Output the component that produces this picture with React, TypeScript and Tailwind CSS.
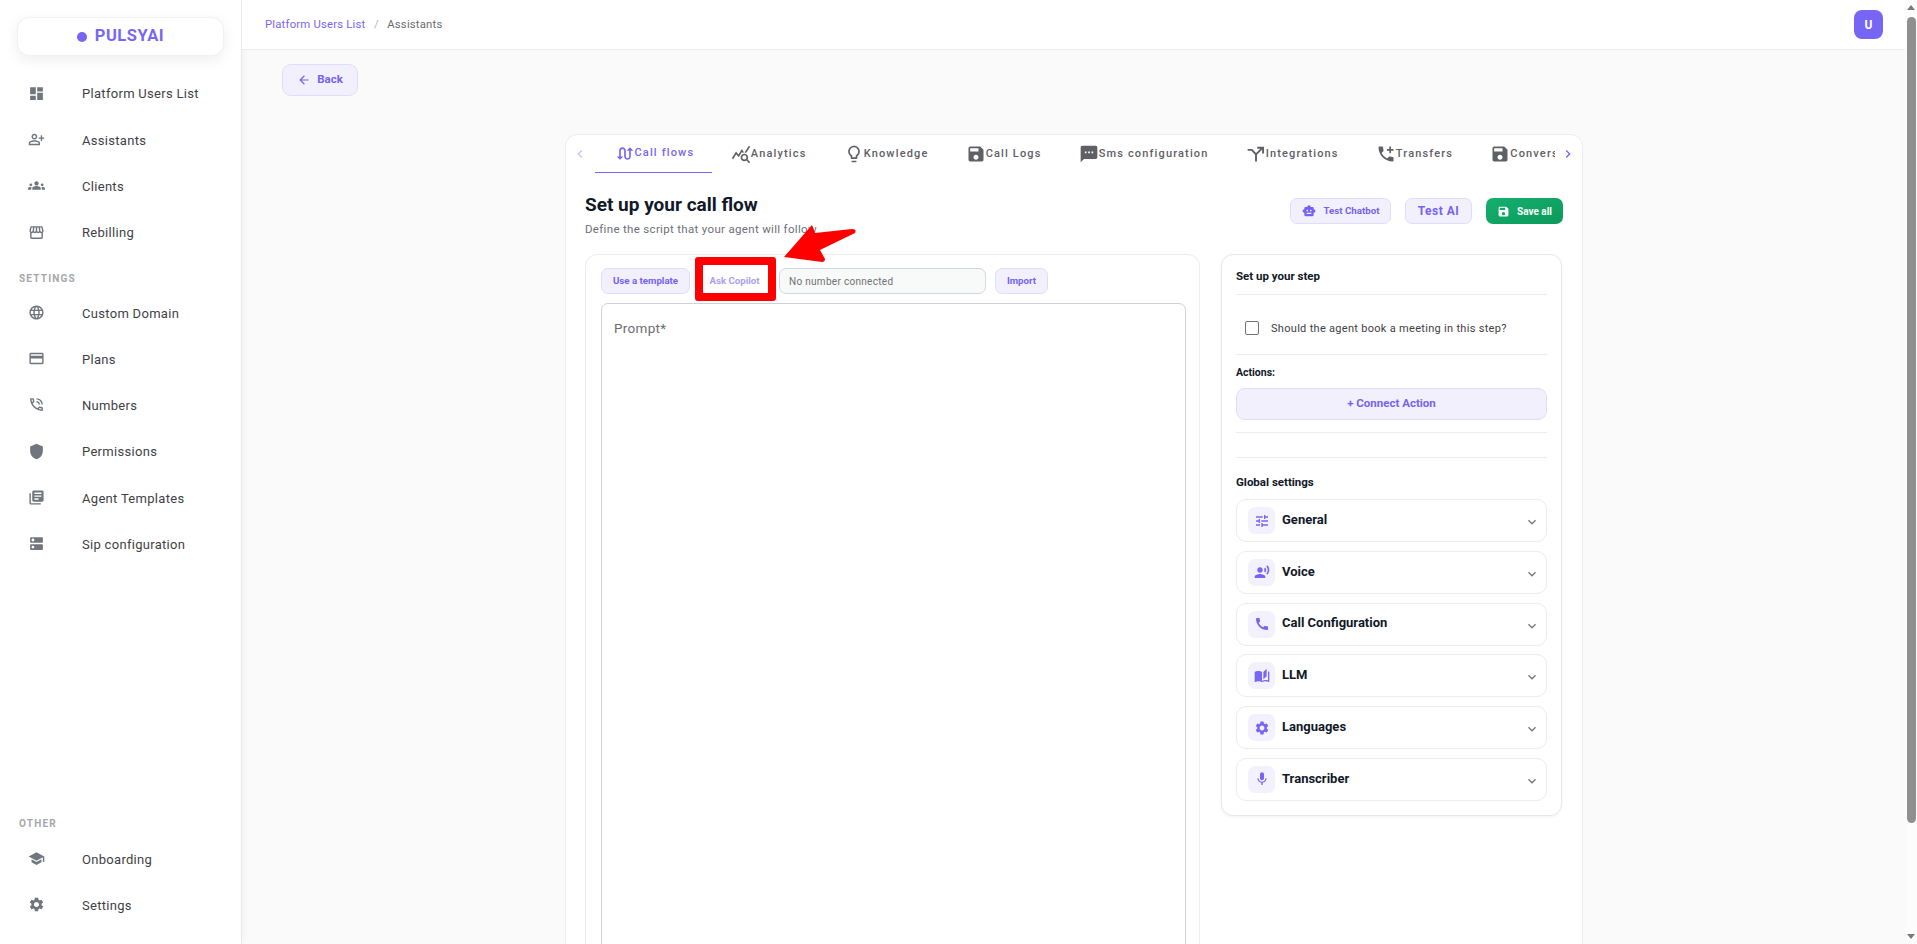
import type { ComponentType, ReactNode } from "react";
import {
  MdDashboard,
  MdOutlinePersonAddAlt,
  MdGroups,
  MdOutlineStorefront,
  MdLanguage,
  MdCreditCard,
  MdOutlinePhoneInTalk,
  MdShield,
  MdLibraryBooks,
  MdDns,
  MdSchool,
  MdSettings,
  MdArrowBack,
  MdSwapCalls,
  MdQueryStats,
  MdLightbulbOutline,
  MdSave,
  MdSms,
  MdAddIcCall,
  MdSmartToy,
  MdTune,
  MdRecordVoiceOver,
  MdCall,
  MdAutoStories,
  MdMic,
  MdChevronLeft,
  MdChevronRight,
  MdExpandMore,
} from "react-icons/md";

type Icon = ComponentType<{ className?: string }>;

// merge-style arrow used by the Integrations tab
const IntegrationsIcon: Icon = ({ className }) => (
  <svg className={className} viewBox="0 0 24 24" fill="none" stroke="currentColor" strokeWidth="2.3">
    <path d="M2 7h5l5 5.5L19.5 5M13.5 4.5h7v7M12 12.5V21" />
  </svg>
);

const mainNav: [string, Icon][] = [
  ["Platform Users List", MdDashboard],
  ["Assistants", MdOutlinePersonAddAlt],
  ["Clients", MdGroups],
  ["Rebilling", MdOutlineStorefront],
];

const settingsNav: [string, Icon][] = [
  ["Custom Domain", MdLanguage],
  ["Plans", MdCreditCard],
  ["Numbers", MdOutlinePhoneInTalk],
  ["Permissions", MdShield],
  ["Agent Templates", MdLibraryBooks],
  ["Sip configuration", MdDns],
];

const otherNav: [string, Icon][] = [
  ["Onboarding", MdSchool],
  ["Settings", MdSettings],
];

const tabs: [string, Icon][] = [
  ["Call flows", MdSwapCalls],
  ["Analytics", MdQueryStats],
  ["Knowledge", MdLightbulbOutline],
  ["Call Logs", MdSave],
  ["Sms configuration", MdSms],
  ["Integrations", IntegrationsIcon],
  ["Transfers", MdAddIcCall],
  ["Conversations", MdSave],
];

const accordions: [string, Icon][] = [
  ["General", MdTune],
  ["Voice", MdRecordVoiceOver],
  ["Call Configuration", MdCall],
  ["LLM", MdAutoStories],
  ["Languages", MdSettings],
  ["Transcriber", MdMic],
];

const NavItem = ({ label, icon: Ico }: { label: string; icon: Icon }) => (
  <div className="flex h-[46.3px] items-center pl-[28px] text-[#3f3f46]">
    <Ico className="h-[17px] w-[17px] shrink-0 -translate-y-[1px] text-[#71757e]" />
    <span className="ml-[37px] text-[13px] tracking-[0.3px]">{label}</span>
  </div>
);

const SectionLabel = ({ children }: { children: ReactNode }) => (
  <div className="pl-[19px] text-[10px] font-bold leading-[12px] tracking-[1.2px] text-[#a5a7ad]">
    {children}
  </div>
);

const SoftButton = ({
  children,
  className,
}: {
  children: ReactNode;
  className: string;
}) => (
  <div
    className={`flex items-center justify-center rounded-[7px] border border-[#e2dcfb] bg-[#f3f0fe] font-bold text-[#7463f0] ${className}`}
  >
    {children}
  </div>
);

const Sidebar = () => (
  <aside className="flex h-full w-[242px] shrink-0 flex-col border-r border-[#e8e8ea] bg-white shadow-[2px_0_8px_rgba(0,0,0,0.03)]">
    <div className="mx-[17px] mt-[17px] flex h-[39px] shrink-0 items-center justify-center rounded-[12px] border border-[#f1f1f3] bg-white shadow-[0_4px_14px_rgba(0,0,0,0.07)]">
      <span className="mr-[8px] h-[10px] w-[10px] rounded-full bg-[#7766f5]" />
      <span className="text-[16.5px] font-bold tracking-[0.55px] text-[#7766f5]">PULSYAI</span>
    </div>
    <nav className="mt-[15px]">
      {mainNav.map(([label, icon]) => (
        <NavItem key={label} label={label} icon={icon} />
      ))}
    </nav>
    <div className="mt-[17px] mb-[5px]">
      <SectionLabel>SETTINGS</SectionLabel>
    </div>
    <nav>
      {settingsNav.map(([label, icon]) => (
        <NavItem key={label} label={label} icon={icon} />
      ))}
    </nav>
    <div className="mt-auto mb-[6px]">
      <SectionLabel>OTHER</SectionLabel>
    </div>
    <nav className="mb-[15px]">
      {otherNav.map(([label, icon]) => (
        <NavItem key={label} label={label} icon={icon} />
      ))}
    </nav>
  </aside>
);

const TopBar = () => (
  <header className="flex h-[50px] shrink-0 items-center justify-between border-b border-[#ececee] bg-white pl-[23px] pr-[22px]">
    <div className="flex items-center pt-[2px] text-[11.3px] tracking-[0.2px]">
      <span className="text-[#7766f5]">Platform Users List</span>
      <span className="mx-[8.5px] text-[#b5b5b8]">/</span>
      <span className="text-[#6b6b70]">Assistants</span>
    </div>
    <div className="flex h-[29px] w-[29px] items-center justify-center rounded-[8px] bg-[#7766f5] text-[12px] font-bold text-white">
      U
    </div>
  </header>
);

const Tabs = () => (
  <div className="flex h-[38px] items-stretch">
    <div className="flex w-[29px] shrink-0 items-center justify-end pr-[7px] text-[#c9c3f8]">
      <MdChevronLeft className="h-[16px] w-[16px]" />
    </div>
    <div className="flex w-[960px] overflow-hidden">
      {tabs.map(([label, Ico], i) => (
        <div
          key={label}
          className={`flex shrink-0 items-center whitespace-nowrap text-[11px] font-medium tracking-[1.15px] ${
            i === 0
              ? "border-b border-[#7766f5] pl-[19.5px] pr-[18px] text-[#7766f5]"
              : "px-[18.6px] text-[#5f6066]"
          }`}
        >
          <Ico className="h-[20px] w-[20px] shrink-0" />
          {label}
        </div>
      ))}
    </div>
    <div className="flex flex-1 items-center justify-end pr-[6px] text-[#7766f5]">
      <MdChevronRight className="h-[16px] w-[16px]" />
    </div>
  </div>
);

const ActionsBar = () => (
  <div className="flex h-[48px] items-start justify-between">
    <div>
      <h1 className="text-[19px] font-bold leading-[26px] text-[#111827]">Set up your call flow</h1>
      <p className="mt-[3px] text-[11.5px] leading-[16px] tracking-[0.32px] text-[#6d7078]">
        Define the script that your agent will follow
      </p>
    </div>
    <div className="mt-[6px] flex gap-[14px]">
      <SoftButton className="h-[26px] w-[101px] gap-[8px] text-[9.7px]">
        <MdSmartToy className="h-[14px] w-[14px]" />
        Test Chatbot
      </SoftButton>
      <SoftButton className="h-[26px] w-[67px] text-[12px] tracking-[0.5px]">Test AI</SoftButton>
      <div className="flex h-[26px] w-[77px] items-center justify-center gap-[7px] rounded-[7px] bg-gradient-to-br from-[#15b06d] to-[#0a9a5c] text-[10px] font-bold text-white">
        <MdSave className="h-[13px] w-[13px]" />
        Save all
      </div>
    </div>
  </div>
);

const PromptPanel = () => (
  <section className="relative h-[800px] w-[615px] shrink-0 rounded-[12px] border border-[#ececf0] bg-white pl-[15px] pr-[13px] pt-[13px]">
    <div className="flex h-[26px] items-stretch">
      <SoftButton className="w-[89px] text-[9.7px]">Use a template</SoftButton>
      <div className="ml-[11px] flex w-[67px] items-center justify-center rounded-[7px] text-[9.7px] font-bold text-[#a99ff6]">
        Ask Copilot
      </div>
      <div className="ml-[11px] flex w-[207px] items-center rounded-[7px] border border-[#d5d7de] bg-[#f8f9f9] pl-[9px] text-[10px] tracking-[0.3px] text-[#6f7176]">
        No number connected
      </div>
      <SoftButton className="ml-[9px] w-[53px] text-[9.7px]">Import</SoftButton>
    </div>
    <div className="mt-[9px] h-[700px] rounded-[7px] border border-[#cfd1d8] bg-white pl-[12px] pt-[14px] text-[13.5px] tracking-[0.3px] text-[#6b6d72]">
      Prompt*
    </div>
    {/* Red annotation box around Ask Copilot */}
    <div className="absolute left-[109px] top-[2px] h-[44px] w-[81px] rounded-[3px] border-[8px] border-[#ff0000]" />
  </section>
);

const SettingsPanel = () => (
  <section className="h-[562px] w-[341px] shrink-0 rounded-[12px] border border-[#e8e8ec] bg-white px-[14px] shadow-[0_1px_3px_rgba(0,0,0,0.06)]">
    <div className="flex h-[40px] items-center border-b border-[#ececf0] pt-[4px] text-[11.5px] font-bold text-[#111827]">
      Set up your step
    </div>
    <div className="flex h-[60px] items-center border-b border-[#ececf0] pl-[9px] pt-[9px]">
      <span className="h-[14px] w-[14px] -translate-y-[1px] rounded-[2px] border border-[#6f7176]" />
      <span className="ml-[12px] text-[11px] tracking-[0.3px] text-[#3f4046]">
        Should the agent book a meeting in this step?
      </span>
    </div>
    <div className="pt-[11px] text-[10.5px] font-bold leading-[14px] text-[#111827]">Actions:</div>
    <SoftButton className="mt-[8px] h-[32px] w-full rounded-[9px] text-[11.5px]">+ Connect Action</SoftButton>
    <div className="mt-[12px] h-[26px] border-y border-[#ececf0]" />
    <div className="pt-[17px] text-[11.5px] font-bold leading-[14px] text-[#111827]">Global settings</div>
    <div className="mt-[10px] flex flex-col gap-[8.8px]">
      {accordions.map(([label, Ico]) => (
        <div
          key={label}
          className="flex h-[43px] items-center rounded-[10px] border border-[#ececf0] bg-white pl-[11px] pr-[6px]"
        >
          <span className="flex h-[27px] w-[27px] items-center justify-center rounded-[7px] bg-[#f3f1fe] text-[#7766f5]">
            <Ico className="h-[16px] w-[16px]" />
          </span>
          <span className="ml-[7px] -translate-y-[1px] text-[13px] font-bold text-[#111827]">{label}</span>
          <MdExpandMore className="ml-auto mt-[3px] h-[16px] w-[16px] text-[#77787d]" />
        </div>
      ))}
    </div>
  </section>
);

const RedArrow = () => (
  <svg
    className="pointer-events-none absolute left-[780px] top-[222px] h-[44px] w-[80px]"
    viewBox="780 222 80 44"
  >
    <path
      d="M784 257 L812 225 L815 233 L852 229 Q857 229 855 233 L820 250 L825 259 Q825 262 822 262 Z"
      fill="#ff0000"
    />
  </svg>
);

const Scrollbar = () => (
  <div className="flex h-full w-[12px] shrink-0 flex-col items-center bg-[#fcfcfc]">
    <div className="mt-[5px] h-0 w-0 border-x-[4px] border-b-[5px] border-x-transparent border-b-[#7a7a7a]" />
    <div className="mt-[7px] h-[806px] w-[9px] rounded-full bg-[#8f8f8f]" />
    <div className="mt-auto mb-[5px] h-0 w-0 border-x-[4px] border-t-[5px] border-x-transparent border-t-[#7a7a7a]" />
  </div>
);

export default function App() {
  return (
    <div
      className="relative flex h-[944px] w-full overflow-hidden bg-[#fafafa] text-[14px]"
      style={{ fontFamily: "Roboto, 'Liberation Sans', sans-serif" }}
    >
      <Sidebar />
      <main className="flex min-w-0 flex-1 flex-col">
        <TopBar />
        <div className="pl-[40px] pt-[14px]">
          <SoftButton className="h-[32px] w-[76px] gap-[6px] rounded-[9px] text-[11.5px]">
            <MdArrowBack className="h-[14px] w-[14px]" />
            Back
          </SoftButton>
        </div>
        <div className="ml-[323px] mt-[38px] h-[900px] w-[1018px] rounded-[12px] border border-[#ececf0] bg-white">
          <Tabs />
          <div className="px-[19px] pt-[19px]">
            <ActionsBar />
            <div className="mt-[14px] flex items-start gap-[21px]">
              <PromptPanel />
              <SettingsPanel />
            </div>
          </div>
        </div>
      </main>
      <Scrollbar />
      <RedArrow />
    </div>
  );
}
